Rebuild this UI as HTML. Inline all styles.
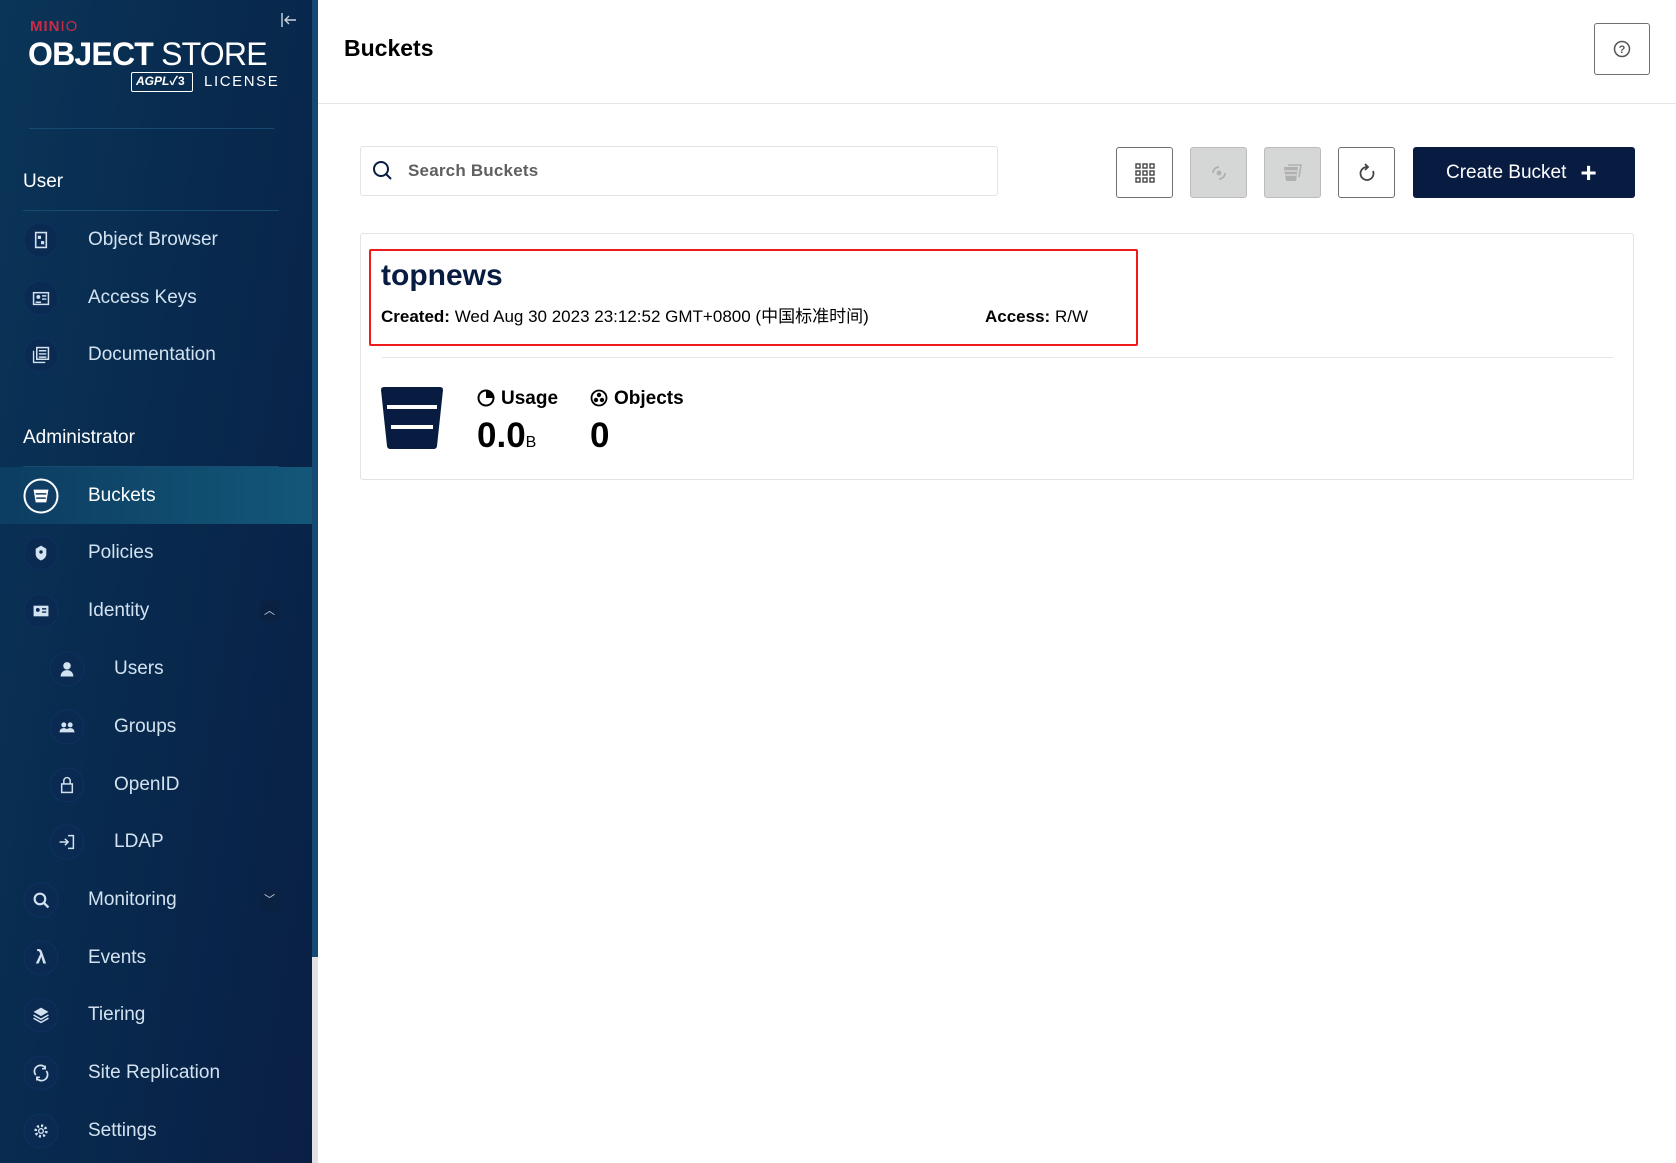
<!DOCTYPE html>
<html><head><meta charset="utf-8"><style>
*{margin:0;padding:0;box-sizing:border-box}
body{width:1676px;height:1163px;position:relative;overflow:hidden;background:#fff;font-family:"Liberation Sans","Noto Sans CJK SC",sans-serif}
.a{position:absolute}
#sb{left:0;top:0;width:312px;height:1163px;background:linear-gradient(100deg,#0a3558 0%,#082a4e 45%,#0a1f45 100%)}
#strip{left:312px;top:0;width:6px;height:957px;background:#144a73}
#strip2{left:312px;top:957px;width:6px;height:206px;background:#e1e1e1}
.sec{color:#fff;font-size:19px;left:23px}
.it{color:#d3e2f0;font-size:19px;left:88px;transform:translateY(-50%)}
.sub{left:114px}
.ic{width:35px;height:35px;border-radius:50%;background:#0b2a52;border:1px solid #0d3260;transform:translate(-50%,-50%);display:flex;align-items:center;justify-content:center}
.ic svg{width:17px;height:17px}
.ln{height:1px;background:#174a70}
.btn{border:1px solid #707070;border-radius:3px;width:57px;height:51px;top:147px;display:flex;align-items:center;justify-content:center;background:#fff}
.dis{background:#d5d6d6;border-color:#bcbcbc}
</style></head><body>
<div id="sb" class="a"></div><div id="strip" class="a"></div><div id="strip2" class="a"></div>
<div class="a" style="left:30px;top:18px;color:#c72c48;font-weight:bold;font-size:15px;letter-spacing:1px">MIN<span style="font-weight:normal">IO</span></div>
<div class="a" style="left:28px;top:36px;color:#fff;font-size:32px;letter-spacing:-0.8px;white-space:nowrap"><b>OBJECT</b> STORE</div>
<div class="a" style="left:131px;top:72px;width:62px;height:20px;border:1px solid #fff;border-radius:2px;color:#fff;font-size:12px;font-style:italic;font-weight:bold;padding-left:4px;line-height:16px">AGPL<span style="font-style:normal">✓3</span></div>
<div class="a" style="left:204px;top:73px;color:#fff;font-size:15px;letter-spacing:1.6px">LICENSE</div>
<svg class="a" style="left:280px;top:12px" width="18" height="16" viewBox="0 0 18 16"><path d="M2 1v14M16 8H5M9 4L5 8l4 4" stroke="#c9d6e2" stroke-width="1.4" fill="none"/></svg>
<div class="a ln" style="left:29px;top:128px;width:245px"></div>
<div class="a sec" style="top:171px">User</div>
<div class="a ln" style="left:23px;top:210px;width:256px"></div>
<div class="a ln" style="left:23px;top:466px;width:256px"></div>
<div class="a sec" style="top:427px">Administrator</div>
<div class="a" style="left:0;top:467px;width:312px;height:57px;background:linear-gradient(90deg,#0c3d62,#135778)"></div>
<div class="a ic" style="left:41px;top:496px;background:#0f3d63;border:2px solid #fff"><svg viewBox="0 0 16 16"><path d="M1 2h14l-2 12H3z" fill="#fff"/><path d="M3 6h10M3.5 10h9" stroke="#0f3d63" stroke-width="1.5"/></svg></div>
<div class="a it" style="top:496px;color:#fff">Buckets</div>

<div class="a ic" style="left:41px;top:240px"><svg viewBox="0 0 16 16"><rect x="3" y="1" width="10" height="14" fill="none" stroke="#d3e2f0" stroke-width="1.5"/><rect x="5" y="4" width="3" height="3" fill="#d3e2f0"/><rect x="8" y="9" width="3" height="3" fill="#d3e2f0"/></svg></div>
<div class="a it" style="top:240px">Object Browser</div>
<div class="a ic" style="left:41px;top:298px"><svg viewBox="0 0 16 16"><rect x="1" y="3" width="14" height="11" fill="none" stroke="#d3e2f0" stroke-width="1.4"/><circle cx="5.5" cy="7" r="1.8" fill="#d3e2f0"/><path d="M9 6h4M9 9h4M3 12h5" stroke="#d3e2f0" stroke-width="1.3"/></svg></div>
<div class="a it" style="top:298px">Access Keys</div>
<div class="a ic" style="left:41px;top:355px"><svg viewBox="0 0 16 16"><rect x="4" y="1" width="11" height="11" fill="none" stroke="#d3e2f0" stroke-width="1.4"/><path d="M1 4v11h11M6 4h7M6 7h7M6 10h7" stroke="#d3e2f0" stroke-width="1.3" fill="none"/></svg></div>
<div class="a it" style="top:355px">Documentation</div>

<div class="a ic" style="left:41px;top:553px"><svg viewBox="0 0 16 16"><path d="M8 1l5 3v5c0 3-2.5 5-5 6-2.5-1-5-3-5-6V4z" fill="#d3e2f0"/><circle cx="8" cy="7" r="1.6" fill="#0b2a52"/></svg></div>
<div class="a it" style="top:553px">Policies</div>
<div class="a ic" style="left:41px;top:611px"><svg viewBox="0 0 16 16"><rect x="1" y="3" width="14" height="10" fill="#d3e2f0"/><circle cx="5" cy="7" r="1.8" fill="#0b2a52"/><path d="M9 6h4M9 9h4" stroke="#0b2a52" stroke-width="1.3"/></svg></div>
<div class="a it" style="top:611px">Identity</div>
<div class="a" style="left:260px;top:601px;width:19px;height:20px;background:#0a2142;border-radius:2px;color:#c9d6e2;font-size:11px;text-align:center;line-height:20px">︿</div>
<div class="a ic" style="left:67px;top:669px"><svg viewBox="0 0 16 16"><circle cx="8" cy="5" r="3.5" fill="#d3e2f0"/><path d="M2 15c0-4 3-6 6-6s6 2 6 6z" fill="#d3e2f0"/></svg></div>
<div class="a it sub" style="top:669px">Users</div>
<div class="a ic" style="left:67px;top:727px"><svg viewBox="0 0 16 16"><circle cx="5" cy="6" r="2.3" fill="#d3e2f0"/><circle cx="11" cy="6" r="2.3" fill="#d3e2f0"/><path d="M1 13c0-3 2-4 4-4s4 1 4 4zM7 13c0-3 2-4 4-4s4 1 4 4z" fill="#d3e2f0"/></svg></div>
<div class="a it sub" style="top:727px">Groups</div>
<div class="a ic" style="left:67px;top:785px"><svg viewBox="0 0 16 16"><rect x="3" y="7" width="10" height="8" fill="none" stroke="#d3e2f0" stroke-width="1.4"/><path d="M5 7V4a3 3 0 016 0v3" fill="none" stroke="#d3e2f0" stroke-width="1.4"/></svg></div>
<div class="a it sub" style="top:785px">OpenID</div>
<div class="a ic" style="left:67px;top:842px"><svg viewBox="0 0 16 16"><path d="M9 2h5v12H9M1 8h8M6 5l3 3-3 3" fill="none" stroke="#d3e2f0" stroke-width="1.4"/></svg></div>
<div class="a it sub" style="top:842px">LDAP</div>
<div class="a ic" style="left:41px;top:900px"><svg viewBox="0 0 16 16"><circle cx="7" cy="7" r="5" fill="none" stroke="#d3e2f0" stroke-width="2"/><path d="M10.5 10.5L15 15" stroke="#d3e2f0" stroke-width="2.2"/></svg></div>
<div class="a it" style="top:900px">Monitoring</div>
<div class="a" style="left:260px;top:890px;width:19px;height:20px;background:#0a2142;border-radius:2px;color:#c9d6e2;font-size:11px;text-align:center;line-height:20px">﹀</div>
<div class="a ic" style="left:41px;top:958px"><span style="color:#d3e2f0;font-size:19px;font-weight:bold">λ</span></div>
<div class="a it" style="top:958px">Events</div>
<div class="a ic" style="left:41px;top:1015px"><svg viewBox="0 0 16 16"><path d="M8 1l7 4-7 4-7-4z" fill="#d3e2f0"/><path d="M1 8l7 4 7-4M1 11l7 4 7-4" fill="none" stroke="#d3e2f0" stroke-width="1.4"/></svg></div>
<div class="a it" style="top:1015px">Tiering</div>
<div class="a ic" style="left:41px;top:1073px"><svg viewBox="0 0 16 16"><path d="M3 10a5.5 5.5 0 019-7M13 6a5.5 5.5 0 01-9 7" fill="none" stroke="#d3e2f0" stroke-width="1.6"/><path d="M12 1v3H9M4 15v-3h3" fill="none" stroke="#d3e2f0" stroke-width="1.4"/></svg></div>
<div class="a it" style="top:1073px">Site Replication</div>
<div class="a ic" style="left:41px;top:1131px"><svg viewBox="0 0 16 16"><circle cx="8" cy="8" r="5" fill="none" stroke="#d3e2f0" stroke-width="2.5" stroke-dasharray="2 1.9"/><circle cx="8" cy="8" r="2.2" fill="none" stroke="#d3e2f0" stroke-width="1.3"/></svg></div>
<div class="a it" style="top:1131px">Settings</div>

<!-- main -->
<div class="a" style="left:344px;top:35px;font-size:23px;font-weight:bold;color:#000">Buckets</div>
<div class="a" style="left:318px;top:103px;width:1358px;height:1px;background:#e5e5e5"></div>
<div class="a" style="left:1594px;top:23px;width:56px;height:52px;border:1px solid #707070;border-radius:3px;display:flex;align-items:center;justify-content:center"><svg width="18" height="18" viewBox="0 0 18 18"><circle cx="9" cy="9" r="7.5" fill="none" stroke="#555" stroke-width="1.5"/><text x="9" y="13" font-size="11" text-anchor="middle" fill="#555" font-family="Liberation Sans" font-weight="bold">?</text></svg></div>
<div class="a" style="left:360px;top:146px;width:638px;height:50px;border:1px solid #e3e3e3;border-radius:3px"></div>
<svg class="a" style="left:372px;top:160px" width="22" height="22" viewBox="0 0 22 22"><circle cx="9" cy="9" r="7" fill="none" stroke="#081c42" stroke-width="2"/><path d="M14 14l5 5" stroke="#081c42" stroke-width="2"/></svg>
<div class="a" style="left:408px;top:161px;font-size:17px;color:#606060;font-weight:bold;letter-spacing:0.2px">Search Buckets</div>
<div class="a btn" style="left:1116px"><svg width="20" height="20" viewBox="0 0 20 20" fill="none" stroke="#444" stroke-width="1.4"><rect x="1" y="1" width="4" height="4"/><rect x="8" y="1" width="4" height="4"/><rect x="15" y="1" width="4" height="4"/><rect x="1" y="8" width="4" height="4"/><rect x="8" y="8" width="4" height="4"/><rect x="15" y="8" width="4" height="4"/><rect x="1" y="15" width="4" height="4"/><rect x="8" y="15" width="4" height="4"/><rect x="15" y="15" width="4" height="4"/></svg></div>
<div class="a btn dis" style="left:1190px"><svg width="20" height="20" viewBox="0 0 20 20"><path d="M4 10a6 6 0 016-6M16 10a6 6 0 01-6 6" fill="none" stroke="#b0b0b0" stroke-width="1.8"/><circle cx="10" cy="10" r="2.5" fill="#b0b0b0"/></svg></div>
<div class="a btn dis" style="left:1264px"><svg width="22" height="20" viewBox="0 0 22 20"><path d="M2 4h14l-2 14H4z" fill="#b0b0b0"/><path d="M6 2h13l-2 12" fill="none" stroke="#b0b0b0" stroke-width="1.5"/><path d="M3 8h12M3.5 12h11" stroke="#d5d6d6" stroke-width="1.5"/></svg></div>
<div class="a btn" style="left:1338px"><svg width="20" height="20" viewBox="0 0 20 20"><path d="M10 4a6.5 6.5 0 106 4" fill="none" stroke="#444" stroke-width="1.8"/><path d="M8 1l3 3-3 3" fill="none" stroke="#444" stroke-width="1.8"/></svg></div>
<div class="a" style="left:1413px;top:147px;width:222px;height:51px;background:#081c42;border-radius:3px;color:#fff;font-size:19px;display:flex;align-items:center;padding-left:33px">Create Bucket<span style="margin-left:14px;font-size:28px;font-weight:bold;line-height:1">+</span></div>

<div class="a" style="left:360px;top:233px;width:1274px;height:247px;border:1px solid #e3e3e3;border-radius:3px"></div>
<div class="a" style="left:369px;top:249px;width:769px;height:97px;border:2px solid #f01a1a;border-radius:2px"></div>
<div class="a" style="left:381px;top:259px;font-size:30px;font-weight:bold;color:#081c42">topnews</div>
<div class="a" style="left:381px;top:307px;font-size:17px;line-height:20px;height:20px;color:#000;white-space:nowrap"><b>Created:</b> Wed Aug 30 2023 23:12:52 GMT+0800 (中国标准时间)</div>
<div class="a" style="left:985px;top:307px;font-size:17px;line-height:20px;height:20px;color:#000"><b>Access:</b> R/W</div>
<div class="a" style="left:382px;top:357px;width:1231px;height:1px;background:#e5e5e5"></div>
<svg class="a" style="left:381px;top:387px" width="62" height="62" viewBox="0 0 62 62"><path d="M3 0h56q3 0 3 3l-6 56q-.5 3-3.5 3H9.5q-3 0-3.5-3L0 3q0-3 3-3z" fill="#081c42"/><path d="M6 20h50M10 40h42" stroke="#fff" stroke-width="4"/></svg>
<svg class="a" style="left:477px;top:389px" width="18" height="18" viewBox="0 0 18 18"><circle cx="9" cy="9" r="7.5" fill="none" stroke="#000" stroke-width="2"/><path d="M9 9V2a7 7 0 017 7z" fill="#000"/></svg>
<div class="a" style="left:501px;top:388px;font-size:19px;font-weight:bold">Usage</div>
<div class="a" style="left:477px;top:416px;font-size:35px;font-weight:bold;white-space:nowrap">0.0<span style="font-size:16px;font-weight:normal">B</span></div>
<svg class="a" style="left:590px;top:389px" width="18" height="18" viewBox="0 0 18 18"><circle cx="9" cy="9" r="7.5" fill="none" stroke="#000" stroke-width="1.8"/><circle cx="9" cy="6" r="2.2"/><circle cx="6" cy="11" r="2.2"/><circle cx="12" cy="11" r="2.2"/></svg>
<div class="a" style="left:614px;top:388px;font-size:19px;font-weight:bold">Objects</div>
<div class="a" style="left:590px;top:416px;font-size:35px;font-weight:bold">0</div>
</body></html>
